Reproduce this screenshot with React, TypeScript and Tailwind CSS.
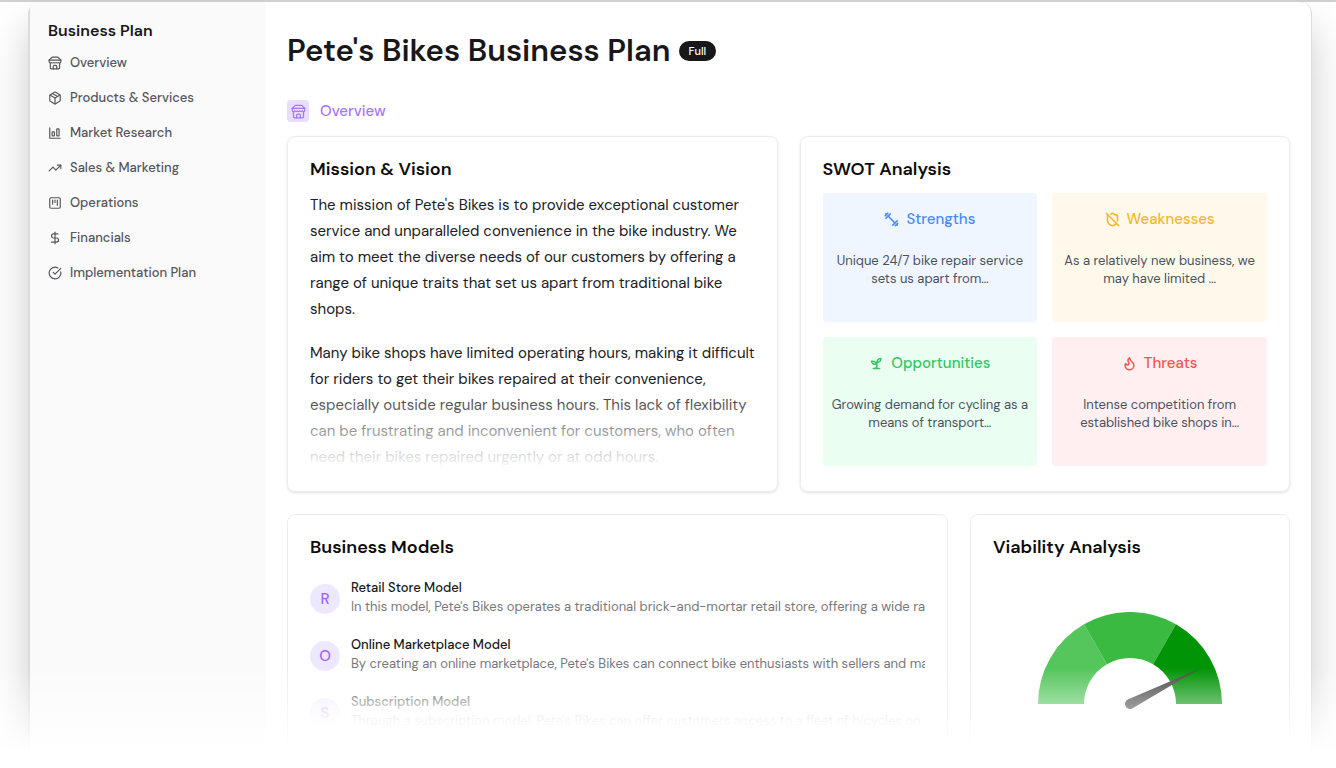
import {
  CircleCheckBig,
  DollarSign,
  Flame,
  Package,
  ShieldOff,
  SquareKanban,
  TrendingUp,
} from "lucide-react";

interface IconProps {
  className?: string;
}

const StoreIcon: React.FunctionComponent<IconProps> = ({ className }) => (
  <svg
    viewBox="0 0 24 24"
    fill="none"
    stroke="currentColor"
    strokeWidth="2"
    strokeLinecap="round"
    strokeLinejoin="round"
    className={className}
    aria-hidden="true"
  >
    <path d="m2 7 4.41-4.41A2 2 0 0 1 7.83 2h8.34a2 2 0 0 1 1.42.59L22 7" />
    <path d="M4 12v8a2 2 0 0 0 2 2h12a2 2 0 0 0 2-2v-8" />
    <path d="M15 22v-4a2 2 0 0 0-2-2h-2a2 2 0 0 0-2 2v4" />
    <path d="M2 7h20" />
    <path d="M22 7v3a2 2 0 0 1-2 2a2.7 2.7 0 0 1-1.59-.63.7.7 0 0 0-.82 0A2.7 2.7 0 0 1 16 12a2.7 2.7 0 0 1-1.59-.63.7.7 0 0 0-.82 0A2.7 2.7 0 0 1 12 12a2.7 2.7 0 0 1-1.59-.63.7.7 0 0 0-.82 0A2.7 2.7 0 0 1 8 12a2.7 2.7 0 0 1-1.59-.63.7.7 0 0 0-.82 0A2.7 2.7 0 0 1 4 12a2 2 0 0 1-2-2V7" />
  </svg>
);

const BarChartIcon: React.FunctionComponent<IconProps> = ({ className }) => (
  <svg
    viewBox="0 0 24 24"
    fill="none"
    stroke="currentColor"
    strokeWidth="2"
    strokeLinecap="round"
    strokeLinejoin="round"
    className={className}
    aria-hidden="true"
  >
    <path d="M3 3v18h18" />
    <rect width="4" height="7" x="7" y="10" rx="1" />
    <rect width="4" height="12" x="15" y="5" rx="1" />
  </svg>
);

const DumbbellIcon: React.FunctionComponent<IconProps> = ({ className }) => (
  <svg
    viewBox="0 0 24 24"
    fill="none"
    stroke="currentColor"
    strokeWidth="2"
    strokeLinecap="round"
    strokeLinejoin="round"
    className={className}
    aria-hidden="true"
  >
    <path d="m6.5 6.5 11 11" />
    <path d="m21 21-1-1" />
    <path d="m3 3 1 1" />
    <path d="m18 22 4-4" />
    <path d="m2 6 4-4" />
    <path d="m3 10 7-7" />
    <path d="m14 21 7-7" />
  </svg>
);

const SproutIcon: React.FunctionComponent<IconProps> = ({ className }) => (
  <svg
    viewBox="0 0 24 24"
    fill="none"
    stroke="currentColor"
    strokeWidth="2"
    strokeLinecap="round"
    strokeLinejoin="round"
    className={className}
    aria-hidden="true"
  >
    <path d="M7 20h10" />
    <path d="M10 20c5.5-2.5.8-6.4 3-10" />
    <path d="M9.5 9.4c1.1.8 1.8 2.2 2.3 3.7-2 .4-3.5.4-4.8-.3-1.2-.6-2.3-1.9-3-4.2 2.8-.5 4.4 0 5.5.8z" />
    <path d="M14.1 6a7 7 0 0 0-1.1 4c1.9-.1 3.3-.6 4.3-1.4 1-1 1.6-2.3 1.7-4.6-2.7.1-4 1-4.9 2z" />
  </svg>
);

const menuData = [
  { name: "Overview", icon: StoreIcon },
  { name: "Products & Services", icon: Package },
  { name: "Market Research", icon: BarChartIcon },
  { name: "Sales & Marketing", icon: TrendingUp },
  { name: "Operations", icon: SquareKanban },
  { name: "Financials", icon: DollarSign },
  { name: "Implementation Plan", icon: CircleCheckBig },
];

const swotData = [
  {
    name: "Strengths",
    icon: DumbbellIcon,
    box: "bg-[#f0f6ff]",
    title: "text-[#4a8af8]",
    lines: ["Unique 24/7 bike repair service", "sets us apart from…"],
  },
  {
    name: "Weaknesses",
    icon: ShieldOff,
    box: "bg-[#fff9eb]",
    title: "text-[#f0b92c]",
    lines: ["As a relatively new business, we", "may have limited …"],
  },
  {
    name: "Opportunities",
    icon: SproutIcon,
    box: "bg-[#eafef2]",
    title: "text-[#34c664]",
    lines: ["Growing demand for cycling as a", "means of transport…"],
  },
  {
    name: "Threats",
    icon: Flame,
    box: "bg-[#ffeff0]",
    title: "text-[#f45656]",
    lines: ["Intense competition from", "established bike shops in…"],
  },
];

const modelData = [
  {
    letter: "R",
    name: "Retail Store Model",
    text: "In this model, Pete's Bikes operates a traditional brick-and-mortar retail store, offering a wide range",
  },
  {
    letter: "O",
    name: "Online Marketplace Model",
    text: "By creating an online marketplace, Pete's Bikes can connect bike enthusiasts with sellers and manufacturers",
  },
  {
    letter: "S",
    name: "Subscription Model",
    text: "Through a subscription model, Pete's Bikes can offer customers access to a fleet of bicycles on a",
  },
];

const Sidebar = () => {
  return (
    <aside className="w-[236px] shrink-0 bg-[#fafafa] pl-[18px] pt-[15px]">
      <h2 className="text-base font-semibold leading-7 text-[#18181b]">
        Business Plan
      </h2>
      <nav className="flex flex-col">
        {menuData.map((item) => (
          <a
            key={item.name}
            href="#"
            className="flex h-[35px] items-center gap-2 text-[13px] font-medium text-[#56565a]"
          >
            <item.icon className="size-[14px]" />
            {item.name}
          </a>
        ))}
      </nav>
    </aside>
  );
};

const Gauge = () => {
  return (
    <svg
      viewBox="0 0 184 100"
      className="mx-auto mt-[49px] block w-[184px]"
      role="img"
      aria-label="Viability gauge"
    >
      <path d="M0 92A92 92 0 0 1 46 12.3L69 52.2A46 46 0 0 0 46 92Z" fill="#55c65c" />
      <path d="M46 12.3A92 92 0 0 1 138 12.3L115 52.2A46 46 0 0 0 69 52.2Z" fill="#3aba40" />
      <path d="M138 12.3A92 92 0 0 1 184 92L138 92A46 46 0 0 0 115 52.2Z" fill="#009406" />
      <path d="M161 57 94.2 96.5A5 5 0 1 1 89.8 87.5Z" fill="#464646" />
    </svg>
  );
};

const App: React.FunctionComponent = () => {
  return (
    <div className="relative h-screen overflow-hidden border-t-2 border-[#cfcfcf] bg-white pl-7 pr-6 font-['DM_Sans','Inter',sans-serif]">
      <div className="flex h-full rounded-t-xl border-l-2 border-r border-[#dcdcdc] bg-white shadow-[0_24px_40px_rgba(0,0,0,0.2)]">
        <Sidebar />
        <main className="min-w-0 flex-1 pl-[21px] pr-[21px] pt-7">
          <div className="flex items-center gap-2">
            <h1 className="text-[31px] font-semibold leading-[42px] text-[#18181b]">
              Pete's Bikes Business Plan
            </h1>
            <span className="rounded-full bg-[#18181b] px-[10px] text-[11px] font-medium leading-5 text-white">
              Full
            </span>
          </div>
          <div className="mt-7 flex items-center gap-[11px] text-[#a478f8]">
            <span className="flex size-[22px] items-center justify-center rounded-sm bg-[#e9defb]">
              <StoreIcon className="size-[15px]" />
            </span>
            <h2 className="text-[15px] font-medium leading-[22px]">Overview</h2>
          </div>

          <div className="mt-[14px] grid h-[356px] grid-cols-2 gap-[22px]">
            <section className="rounded-lg border border-[#ececee] px-[22px] pt-4 shadow-sm">
              <h3 className="text-lg font-semibold leading-8 text-[#0c0c0e]">
                Mission & Vision
              </h3>
              <div className="relative -mr-2 mt-[7px] flex flex-col gap-[18px] text-[15px] leading-[26px] text-[#202024]">
                <p>
                  The mission of Pete's Bikes is to provide exceptional customer
                  service and unparalleled convenience in the bike industry. We
                  aim to meet the diverse needs of our customers by offering a
                  range of unique traits that set us apart from traditional bike
                  shops.
                </p>
                <p>
                  Many bike shops have limited operating hours, making it
                  difficult for riders to get their bikes repaired at their
                  convenience, especially outside regular business hours. This
                  lack of flexibility can be frustrating and inconvenient for
                  customers, who often need their bikes repaired urgently or at
                  odd hours.
                </p>
                <div className="absolute inset-x-0 bottom-0 h-[86px] bg-linear-to-t from-white to-transparent"></div>
              </div>
            </section>

            <section className="rounded-lg border border-[#ececee] px-[22px] pt-4 shadow-sm">
              <h3 className="text-lg font-semibold leading-8 text-[#0c0c0e]">
                SWOT Analysis
              </h3>
              <div className="mt-2 grid grid-cols-2 gap-[15px]">
                {swotData.map((item) => (
                  <div
                    key={item.name}
                    className={`h-[129px] rounded pt-[15px] text-center ${item.box}`}
                  >
                    <h4
                      className={`flex items-center justify-center gap-[7px] text-[15px] font-medium leading-[22px] ${item.title}`}
                    >
                      <item.icon className="size-[15px] stroke-[2.5]" />
                      {item.name}
                    </h4>
                    <p className="mt-[22px] whitespace-nowrap text-[13px] leading-[18px] text-[#4a525e]">
                      {item.lines[0]}
                      <br />
                      {item.lines[1]}
                    </p>
                  </div>
                ))}
              </div>
            </section>
          </div>

          <div className="mt-[22px] flex h-[236px] gap-[22px]">
            <section className="min-w-0 flex-1 rounded-lg border border-[#ececee] px-[22px] pt-4">
              <h3 className="text-lg font-semibold leading-8 text-[#0c0c0e]">
                Business Models
              </h3>
              <div className="relative mt-[15px]">
                <ul className="flex flex-col gap-[19px]">
                  {modelData.map((model) => (
                    <li
                      key={model.name}
                      className="flex items-center gap-[11px]"
                    >
                      <span className="mt-1 flex size-[30px] shrink-0 items-center justify-center rounded-full bg-[#ede8fd] text-[15px] font-medium text-[#a066f5]">
                        {model.letter}
                      </span>
                      <div className="min-w-0 text-[13px] leading-[19px]">
                        <p className="font-medium text-[#18181b]">
                          {model.name}
                        </p>
                        <p className="overflow-hidden whitespace-nowrap text-[#77777d]">
                          {model.text}
                        </p>
                      </div>
                    </li>
                  ))}
                </ul>
                <div className="absolute inset-x-0 bottom-0 h-[50px] bg-linear-to-t from-white to-transparent"></div>
              </div>
            </section>
            <section className="w-[320px] shrink-0 rounded-lg border border-[#ececee] px-[22px] pt-4">
              <h3 className="text-lg font-semibold leading-8 text-[#0c0c0e]">
                Viability Analysis
              </h3>
              <Gauge />
            </section>
          </div>
        </main>
      </div>
      <div className="pointer-events-none absolute inset-x-0 bottom-0 h-[100px] bg-linear-to-t from-white from-15% to-transparent"></div>
    </div>
  );
};

export default App;
